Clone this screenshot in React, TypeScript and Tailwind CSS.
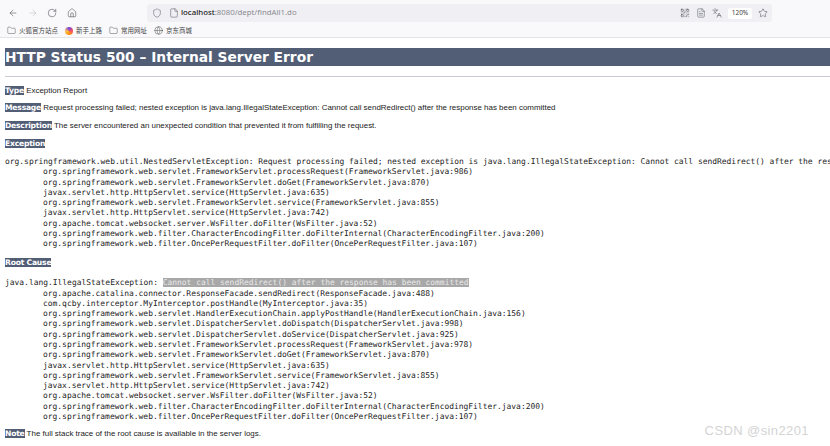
import { ArrowLeft, ArrowRight, RotateCw, Home, Shield, File, QrCode, FileText, Languages, Star, Folder, Globe } from "lucide-react";

const sans = "font-['Noto_Sans',_'Noto_Sans_CJK_SC',sans-serif]";

const trace1 = [
  "org.springframework.web.servlet.FrameworkServlet.processRequest(FrameworkServlet.java:986)",
  "org.springframework.web.servlet.FrameworkServlet.doGet(FrameworkServlet.java:870)",
  "javax.servlet.http.HttpServlet.service(HttpServlet.java:635)",
  "org.springframework.web.servlet.FrameworkServlet.service(FrameworkServlet.java:855)",
  "javax.servlet.http.HttpServlet.service(HttpServlet.java:742)",
  "org.apache.tomcat.websocket.server.WsFilter.doFilter(WsFilter.java:52)",
  "org.springframework.web.filter.CharacterEncodingFilter.doFilterInternal(CharacterEncodingFilter.java:200)",
  "org.springframework.web.filter.OncePerRequestFilter.doFilter(OncePerRequestFilter.java:107)",
];

const trace2 = [
  "org.apache.catalina.connector.ResponseFacade.sendRedirect(ResponseFacade.java:488)",
  "com.qcby.interceptor.MyInterceptor.postHandle(MyInterceptor.java:35)",
  "org.springframework.web.servlet.HandlerExecutionChain.applyPostHandle(HandlerExecutionChain.java:156)",
  "org.springframework.web.servlet.DispatcherServlet.doDispatch(DispatcherServlet.java:998)",
  "org.springframework.web.servlet.DispatcherServlet.doService(DispatcherServlet.java:925)",
  "org.springframework.web.servlet.FrameworkServlet.processRequest(FrameworkServlet.java:978)",
  "org.springframework.web.servlet.FrameworkServlet.doGet(FrameworkServlet.java:870)",
  "javax.servlet.http.HttpServlet.service(HttpServlet.java:635)",
  "org.springframework.web.servlet.FrameworkServlet.service(FrameworkServlet.java:855)",
  "javax.servlet.http.HttpServlet.service(HttpServlet.java:742)",
  "org.apache.tomcat.websocket.server.WsFilter.doFilter(WsFilter.java:52)",
  "org.springframework.web.filter.CharacterEncodingFilter.doFilterInternal(CharacterEncodingFilter.java:200)",
  "org.springframework.web.filter.OncePerRequestFilter.doFilter(OncePerRequestFilter.java:107)",
];

function Label({ children }: { children: string }) {
  return <b className="bg-[#525D76] text-white font-bold font-['DejaVu_Sans',sans-serif] text-[7.6px] tracking-[-0.2px]">{children}</b>;
}

function Row({ label, children, className }: { label: string; children?: string; className: string }) {
  return (
    <p className={`font-['Liberation_Sans',sans-serif] text-[7.95px] leading-[12px] text-[#222] whitespace-nowrap ${className}`}>
      <Label>{label}</Label>
      {children ? " " + children : null}
    </p>
  );
}

function Mono({ head, lines, className, highlight }: { head: string; lines: string[]; className: string; highlight?: string }) {
  return (
    <div className={`font-['DejaVu_Sans_Mono',monospace] text-[7.94px] leading-[10.27px] text-[#222] whitespace-pre ${className}`}>
      <div>
        {head}
        {highlight ? <span className="bg-[#a8a8a8] text-[#e8e8e8]">{highlight}</span> : null}
      </div>
      {lines.map((l, i) => (
        <div key={i} className="pl-[38px]">{l}</div>
      ))}
    </div>
  );
}

function Bookmark({ icon, text }: { icon: React.ReactNode; text: string }) {
  return (
    <div className={`flex items-center text-[6.5px] text-[#444] gap-[3px] ${sans}`}>
      {icon}
      <span>{text}</span>
    </div>
  );
}

export default function App() {
  return (
    <div className="w-[830px] h-[446px] overflow-hidden bg-white flex flex-col">
      <header className="h-[38px] shrink-0 bg-[#f9f9fb] border-b border-[#e4e4e7] flex flex-col">
        <div className="h-[22px] mt-[2px] flex items-center pl-[8px] pr-[58px] text-[#5b5b66]">
          <div className="flex items-center gap-[9.5px] w-[139px]">
            <ArrowLeft size={10} strokeWidth={1.5} />
            <ArrowRight size={10} strokeWidth={1.5} className="text-[#c4c4c8]" />
            <RotateCw size={10} strokeWidth={1.5} />
            <Home size={10} strokeWidth={1.5} />
          </div>
          <div className={`flex-1 h-[18px] rounded-[3px] bg-[#f0f0f4] flex items-center pl-[5px] pr-[4px] text-[7.8px] ${sans}`}>
            <Shield size={10} strokeWidth={1.3} />
            <File size={10} strokeWidth={1.3} className="ml-[7px]" />
            <span className="ml-[2px] text-[#8a8a92]"><span className="text-[#222] font-medium">localhost</span>:8080/dept/findAll1.do</span>
            <QrCode size={10} strokeWidth={1.6} className="ml-auto" />
            <FileText size={10} strokeWidth={1.3} className="ml-[6px]" />
            <Languages size={10} strokeWidth={1.4} className="ml-[6px]" />
            <span className="ml-[6px] w-[24px] h-[11px] bg-white rounded-[2px] flex items-center justify-center text-[6.5px] text-[#444]">120%</span>
            <Star size={10} strokeWidth={1.4} className="ml-[6px]" />
          </div>
        </div>
        <div className="h-[13px] flex items-center pl-[7px] gap-[7px]">
          <Bookmark icon={<Folder size={9} strokeWidth={1.2} />} text="火狐官方站点" />
          <Bookmark icon={<span className="w-[8px] h-[8px] rounded-full bg-[conic-gradient(#7542e5,#ff4f5e,#ff980e,#ffbd4f,#7542e5)]" />} text="新手上路" />
          <Bookmark icon={<Folder size={9} strokeWidth={1.2} />} text="常用网址" />
          <Bookmark icon={<Globe size={9} strokeWidth={1.2} />} text="京东商城" />
        </div>
      </header>
      <main className="pl-[5px] flex-1 min-w-0">
        <h1 className="mt-[10px] h-[18px] w-[825px] bg-[#525D76] text-white font-bold font-['DejaVu_Sans',sans-serif] text-[13.8px] leading-[18px] whitespace-nowrap">
          HTTP Status 500 – Internal Server Error
        </h1>
        <hr className="mt-[10px] h-px border-0 bg-[#c9ccd6]" />
        <Row label="Type" className="mt-[8px]">Exception Report</Row>
        <Row label="Message" className="mt-[5px]">Request processing failed; nested exception is java.lang.IllegalStateException: Cannot call sendRedirect() after the response has been committed</Row>
        <Row label="Description" className="mt-[6px]">The server encountered an unexpected condition that prevented it from fulfilling the request.</Row>
        <Row label="Exception" className="mt-[6px]" />
        <Mono
          className="mt-[7px]"
          head="org.springframework.web.util.NestedServletException: Request processing failed; nested exception is java.lang.IllegalStateException: Cannot call sendRedirect() after the response has been committed"
          lines={trace1}
        />
        <Row label="Root Cause" className="mt-[8px]" />
        <Mono
          className="mt-[9px]"
          head="java.lang.IllegalStateException: "
          highlight="Cannot call sendRedirect() after the response has been committed"
          lines={trace2}
        />
        <Row label="Note" className="mt-[6px]">The full stack trace of the root cause is available in the server logs.</Row>
      </main>
      <div className="absolute right-[21px] top-[423px] text-[13px] text-[#d4d4d4] font-['Liberation_Sans',sans-serif] tracking-[0.4px] leading-[16px]">
        CSDN @sin2201
      </div>
    </div>
  );
}
